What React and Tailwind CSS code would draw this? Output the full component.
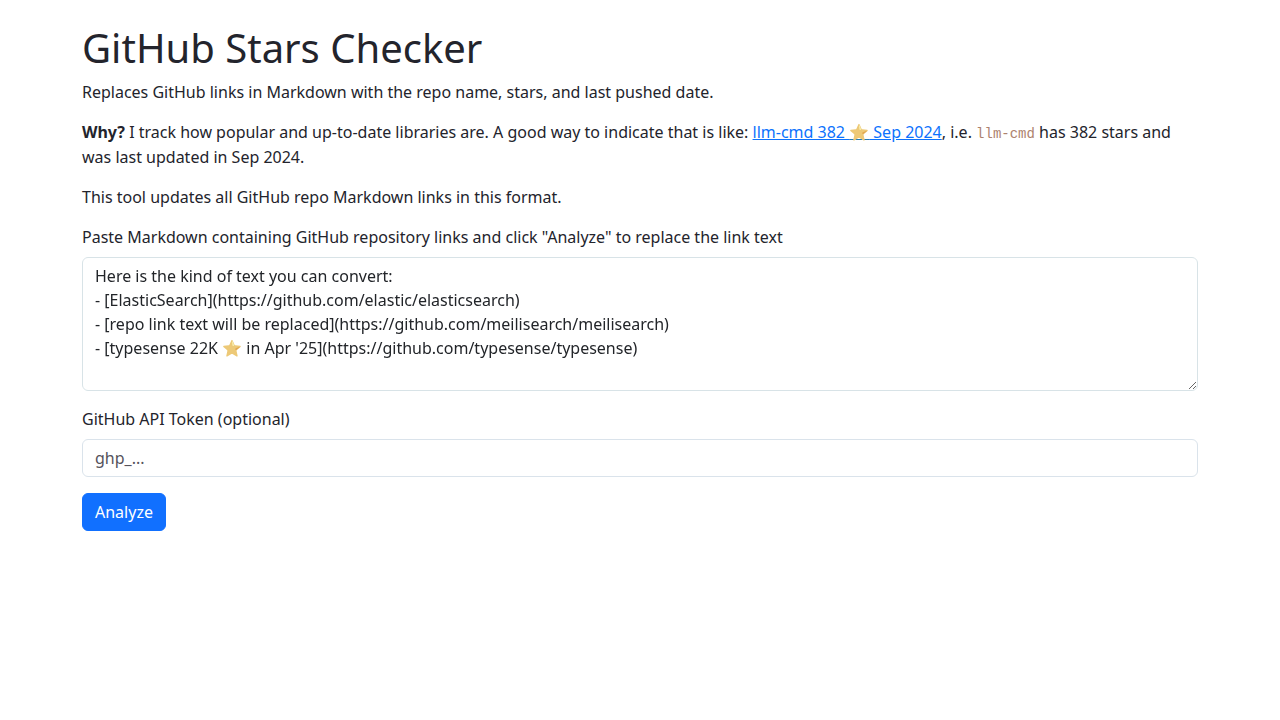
export default function App() {
  return (
    <main className="mx-auto max-w-[1140px] px-3 py-6 font-['Noto_Sans',sans-serif] text-base leading-6 text-[#23242c]">
      <h1 className="mb-2 text-[40px] leading-[48px]">GitHub Stars Checker</h1>
      <p className="mb-4">Replaces GitHub links in Markdown with the repo name, stars, and last pushed date.</p>
      <p className="mb-4">
        <strong className="font-bold">Why?</strong> I track how popular and up-to-date libraries are. A good way to indicate that is like:{" "}
        <a href="https://github.com/simonw/llm-cmd" className="text-[#0d72fd] underline">
          llm-cmd 382 <span className="hue-rotate-[-18deg] saturate-[0.65]">⭐</span> Sep 2024
        </a>
        , i.e.{" "}
        <code className="font-['Liberation_Mono',monospace] text-sm leading-[21px] text-[#ad826e]">llm-cmd</code> has 382 stars and was last updated in Sep 2024.
      </p>
      <p className="mb-4">This tool updates all GitHub repo Markdown links in this format.</p>
      <form onSubmit={(e) => e.preventDefault()}>
        <div className="mb-4 flex flex-col gap-2">
          <label htmlFor="markdown">Paste Markdown containing GitHub repository links and click "Analyze" to replace the link text</label>
          <textarea
            id="markdown"
            rows={5}
            className="w-full resize-y rounded-md border border-[#d6e3ee] bg-transparent px-3 py-1.5 leading-6 hue-rotate-[-18deg] saturate-[0.65]"
            defaultValue={`Here is the kind of text you can convert:
- [ElasticSearch](https://github.com/elastic/elasticsearch)
- [repo link text will be replaced](https://github.com/meilisearch/meilisearch)
- [typesense 22K ⭐ in Apr '25](https://github.com/typesense/typesense)
`}
          />
        </div>
        <div className="mb-4 flex flex-col gap-2">
          <label htmlFor="token">GitHub API Token (optional)</label>
          <input id="token" type="text" placeholder="ghp_..." className="w-full rounded-md border border-[#dae3eb] bg-white px-3 py-1.5 leading-6 placeholder:text-[#55525c]" />
        </div>
        <button type="submit" className="rounded-md border border-[#1170ff] bg-[#1170ff] px-3 py-1.5 leading-6 text-white">Analyze</button>
      </form>
    </main>
  );
}
